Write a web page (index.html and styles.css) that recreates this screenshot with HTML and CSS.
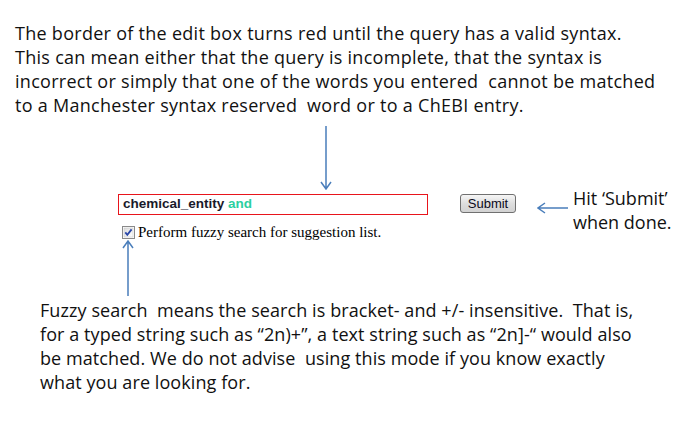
FILE: index.html
```html
<!DOCTYPE html>
<html>
<head>
<meta charset="utf-8">
<link rel="stylesheet" href="styles.css">
</head>
<body>
<p class="intro">The border of the edit box turns red until the query has a valid syntax.<br>This can mean either that the query is incomplete, that the syntax is<br>incorrect or simply that one of the words you entered&nbsp; cannot be matched<br>to a Manchester syntax reserved&nbsp; word or to a ChEBI entry.</p>
<div class="stage">
  <svg class="arrow-down" width="12" height="64" viewBox="0 0 12 64"><path d="M6 0 V63 M1 56 L6 63 L11 56" fill="none" stroke="#4a7ebb" stroke-width="1.5"/></svg>
  <div class="row">
    <div class="query"><b class="kw">chemical_entity</b> <b class="op">and</b></div>
    <div class="btn">Submit</div>
    <svg class="arrow-left" width="32" height="14" viewBox="0 0 32 14"><path d="M31 7 H1 M8 2 L1 7 L8 12" fill="none" stroke="#4a7ebb" stroke-width="1.5"/></svg>
    <p class="note">Hit ‘Submit’<br>when done.</p>
  </div>
  <label class="check">
    <svg class="box" width="13" height="13" viewBox="0 0 13 13"><defs><linearGradient id="g" x1="0" y1="0" x2="1" y2="1"><stop offset="0" stop-color="#dcdcdc"/><stop offset="1" stop-color="#ffffff"/></linearGradient></defs><rect x="0.5" y="0.5" width="12" height="12" fill="#fff" stroke="#8a8a8a"/><rect x="2" y="2" width="9" height="9" fill="url(#g)" stroke="#c8c8c8" stroke-width="0.6"/><path d="M3.3 6.4 L5.3 8.8 L9.6 3.4" fill="none" stroke="#2a47a8" stroke-width="1.8"/></svg>
    <span class="check-label">Perform fuzzy search for suggestion list.</span>
  </label>
  <svg class="arrow-up" width="12" height="56" viewBox="0 0 12 56"><path d="M6 56 V1 M1 8 L6 1 L11 8" fill="none" stroke="#4a7ebb" stroke-width="1.5"/></svg>
</div>
<p class="outro">Fuzzy search&nbsp; means the search is bracket- and +/- insensitive.&nbsp; That is,<br>for a typed string such as “2n)+”, a text string such as “2n]-“ would also<br>be matched. We do not advise&nbsp; using this mode if you know exactly<br>what you are looking for.</p>
</body>
</html>
```
FILE: styles.css
```css
html, body {
  margin: 0;
  padding: 0;
  background: #fff;
}
body {
  width: 700px;
  height: 424px;
  overflow: hidden;
  font-family: "Open Sans", Lato, sans-serif;
  color: #111;
}
.intro {
  margin: 0;
  padding: 21px 0 0 15px;
  font-size: 18px;
  line-height: 24px;
  letter-spacing: 0.28px;
  white-space: nowrap;
}
.stage {
  padding-left: 118px;
  display: flex;
  flex-direction: column;
  align-items: flex-start;
}
.arrow-down {
  display: block;
  margin: 9px 0 0 202px;
}
.row {
  display: flex;
  align-items: flex-start;
}
.query {
  box-sizing: border-box;
  width: 310px;
  height: 21px;
  margin-top: 4px;
  border: 1.5px solid #e8141b;
  padding: 0 4px;
  font-family: "Liberation Sans", Arial, sans-serif;
  font-size: 13.5px;
  line-height: 18px;
}
.kw { color: #1a1a2a; }
.op { color: #2ccf9f; }
.btn {
  box-sizing: border-box;
  width: 56px;
  height: 19px;
  margin: 4px 0 0 32px;
  border: 1px solid #707070;
  border-radius: 3px;
  background: linear-gradient(#f6f6f6, #dedede 50%, #d2d2d2);
  font-family: "Liberation Sans", Arial, sans-serif;
  font-size: 13px;
  line-height: 17px;
  text-align: center;
  color: #0a0a1a;
}
.arrow-left {
  display: block;
  margin: 11px 0 0 21px;
}
.note {
  margin: -4px 0 -20px 4px;
  font-size: 18px;
  line-height: 24px;
  white-space: nowrap;
}
.check {
  display: flex;
  align-items: center;
  margin: 9px 0 0 4px;
  font-family: "Liberation Serif", "Times New Roman", serif;
  font-size: 15px;
  line-height: 16px;
  color: #000;
}
.box {
  display: block;
  margin-right: 3px;
}
.arrow-up {
  display: block;
  margin: 0 0 0 4px;
}
.outro {
  margin: 2px 0 0;
  padding-left: 40px;
  font-size: 18px;
  line-height: 24px;
  letter-spacing: 0.08px;
  white-space: nowrap;
}
```
